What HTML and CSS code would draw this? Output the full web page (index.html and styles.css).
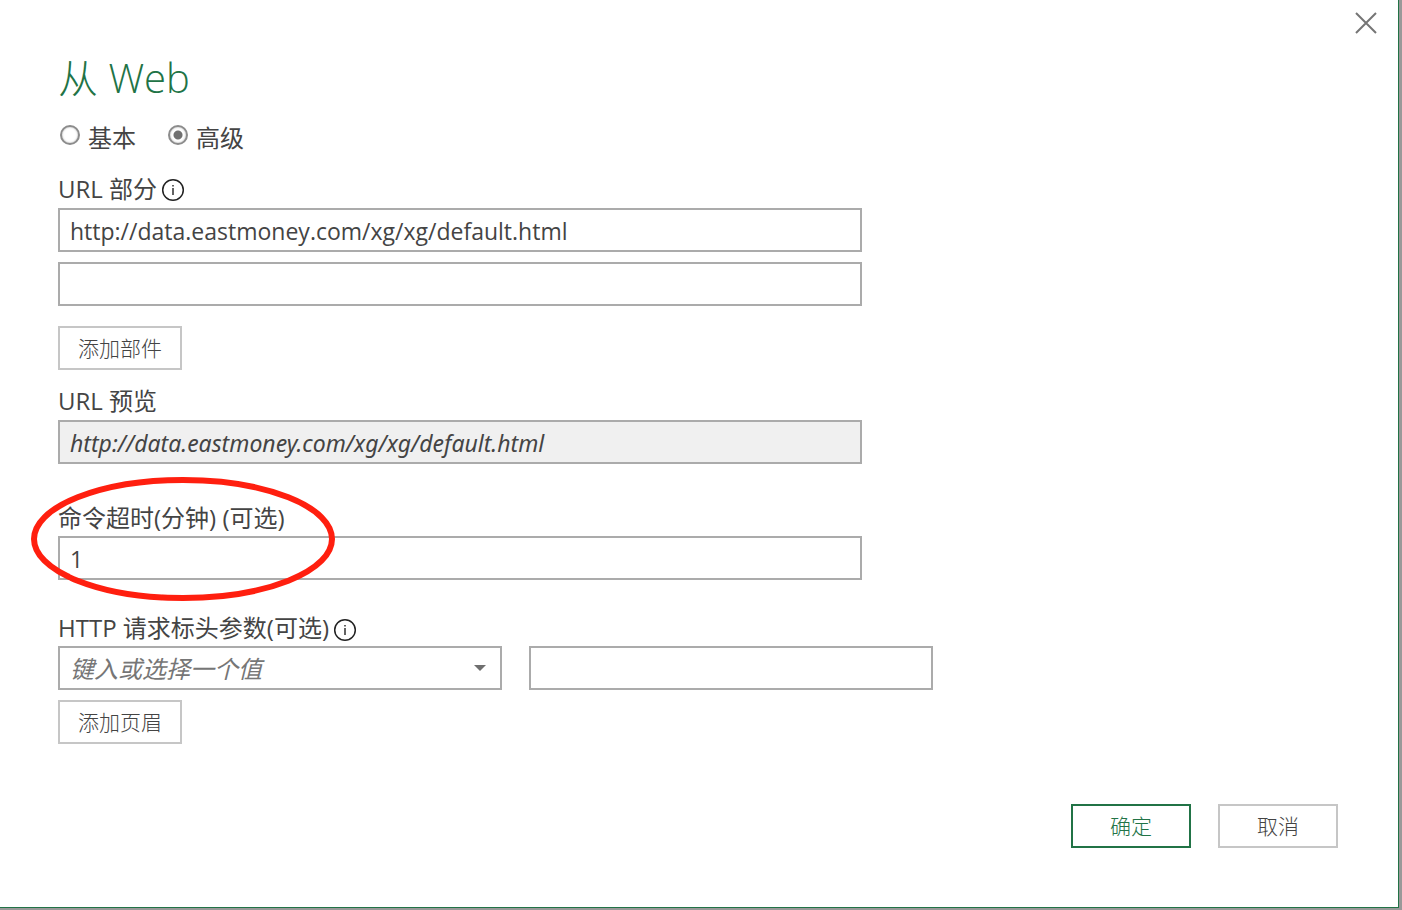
FILE: index.html
```html
<!DOCTYPE html>
<html lang="zh-CN">

<head>
    <meta charset="UTF-8">
    <meta name="viewport" content="width=device-width, initial-scale=1.0">
    <title>从 Web</title>
    <link rel="stylesheet" href="styles.css">
</head>

<body>
    <div class="dialog" role="dialog" aria-labelledby="dialog-title">
        <button class="close" type="button" aria-label="关闭">
            <svg width="22" height="22" viewBox="0 0 22 22">
                <path d="M1 1L21 21M21 1L1 21" fill="none" stroke="#757575" stroke-width="2" />
            </svg>
        </button>
        <form class="content">
            <h1 class="title" id="dialog-title">从 Web</h1>
            <div class="modes">
                <label class="mode"><input type="radio" name="mode">基本</label>
                <label class="mode"><input type="radio" name="mode" checked>高级</label>
            </div>

            <div class="group">
                <div class="caption caption-url">
                    <label for="url-part">URL 部分</label>
                    <svg class="info" width="24" height="24" viewBox="0 0 24 24">
                        <circle cx="12" cy="12" r="10.3" fill="none" stroke="#222" stroke-width="1.5" />
                        <path d="M12 10V17M12 7V8.6" fill="none" stroke="#222" stroke-width="1.4" />
                    </svg>
                </div>
                <div class="parts">
                    <input class="field" id="url-part" type="text" value="http://data.eastmoney.com/xg/xg/default.html">
                    <input class="field" type="text" aria-label="URL 部分 2">
                </div>
                <button class="btn btn-part" type="button">添加部件</button>
            </div>

            <div class="group group-preview">
                <div class="caption caption-url"><label for="preview">URL 预览</label></div>
                <input class="field field-preview" id="preview" type="text" readonly
                    value="http://data.eastmoney.com/xg/xg/default.html">
            </div>

            <div class="group group-timeout">
                <div class="caption"><label for="timeout">命令超时(分钟) (可选)</label></div>
                <input class="field" id="timeout" type="text" value="1">
                <svg class="mark" width="304" height="126" viewBox="0 0 304 126">
                    <ellipse cx="152" cy="63" rx="149" ry="59" fill="none" stroke="#ff1f0f" stroke-width="6" />
                </svg>
            </div>

            <div class="group group-headers">
                <div class="caption">
                    <label for="header-name">HTTP 请求标头参数(可选)</label>
                    <svg class="info" width="24" height="24" viewBox="0 0 24 24">
                        <circle cx="12" cy="12" r="10.3" fill="none" stroke="#222" stroke-width="1.5" />
                        <path d="M12 10V17M12 7V8.6" fill="none" stroke="#222" stroke-width="1.4" />
                    </svg>
                </div>
                <div class="header-row">
                    <div class="combo">
                        <select class="field field-select" id="header-name">
                            <option>键入或选择一个值</option>
                        </select>
                        <svg class="arrow" width="12" height="6" viewBox="0 0 12 6">
                            <path d="M0 0H12L6 6Z" fill="#6f6f6f" />
                        </svg>
                    </div>
                    <input class="field field-value" type="text" aria-label="标头值">
                </div>
                <button class="btn btn-header" type="button">添加页眉</button>
            </div>

            <div class="actions">
                <button class="btn btn-action btn-ok" type="submit">确定</button>
                <button class="btn btn-action" type="button">取消</button>
            </div>
        </form>
    </div>
</body>

</html>
```
FILE: styles.css
```css
* {
    box-sizing: border-box;
    margin: 0;
    padding: 0;
}

:root {
    --green: #217346;
    --text: #444;
    --line: #ababab;
}

body {
    min-height: 100vh;
    display: flex;
    padding: 0 3px 2px 0;
    background: #999;
    color: var(--text);
    font-family: "Open Sans", "Noto Sans CJK SC", sans-serif;
    font-size: 24px;
}

input,
select,
button {
    font-family: inherit;
    color: inherit;
}

.dialog {
    position: relative;
    flex: 1;
    background: #fff;
    border-right: 1px solid var(--green);
    border-bottom: 1px solid var(--green);
}

.close {
    position: absolute;
    top: 12px;
    right: 21px;
    width: 22px;
    height: 22px;
    border: 0;
    background: none;
}

.close svg {
    display: block;
}

.content {
    padding: 54px 60px 56px 58px;
}

.title {
    height: 48px;
    line-height: 48px;
    color: var(--green);
    font-size: 40px;
    font-weight: 300;
}

.modes {
    display: flex;
    gap: 30px;
    margin-top: 20px;
}

.mode {
    display: flex;
    gap: 8px;
    height: 32px;
    line-height: 32px;
}

.mode input {
    appearance: none;
    width: 20px;
    height: 20px;
    margin: 3px 0 0 2px;
    border: 2px solid #8c8c8c;
    border-radius: 50%;
    background: #fff;
    box-shadow: inset 0 0 2px #aaa;
}

.mode input:checked {
    background: radial-gradient(circle, #707070 4px, #fff 5px);
}

.group {
    position: relative;
    margin-top: 18px;
}

.group-preview {
    margin-top: 14px;
}

.group-timeout {
    margin-top: 36px;
}

.group-headers {
    margin-top: 30px;
}

.caption {
    display: flex;
    align-items: center;
    gap: 4px;
    height: 36px;
    font-size: 24px;
    line-height: 32px;
}

.caption-url {
    padding-bottom: 3px;
}

.info {
    margin-top: 3px;
}

.parts {
    display: grid;
    gap: 10px;
}

.field {
    display: block;
    width: 100%;
    max-width: 804px;
    height: 44px;
    padding: 2px 10px 0;
    border: 2px solid var(--line);
    border-radius: 0;
    background: #fff;
    font-size: 23px;
}

.field-preview {
    background: #f0f0f0;
    font-family: "Noto Sans", "Noto Sans CJK SC", sans-serif;
    font-style: italic;
}

.mark {
    position: absolute;
    top: -24px;
    left: -27px;
    pointer-events: none;
}

.header-row {
    display: flex;
    gap: 27px;
}

.combo {
    position: relative;
    flex: 0 1 444px;
}

.field-select {
    appearance: none;
    padding-top: 0;
    color: #767676;
    font-size: 24px;
    font-style: italic;
}

.arrow {
    position: absolute;
    top: 19px;
    right: 16px;
    pointer-events: none;
}

.field-value {
    flex: 0 1 404px;
    min-width: 0;
}

.btn {
    display: block;
    height: 44px;
    padding: 0 18px 2px;
    border: 2px solid #c6c6c6;
    background: #fff;
    font-size: 21px;
    font-weight: 300;
}

.btn-part {
    margin-top: 20px;
}

.btn-header {
    margin-top: 10px;
}

.actions {
    display: flex;
    justify-content: flex-end;
    gap: 27px;
    margin-top: 60px;
}

.btn-action {
    width: 120px;
}

.btn-ok {
    border-color: var(--green);
    color: var(--green);
}
```
